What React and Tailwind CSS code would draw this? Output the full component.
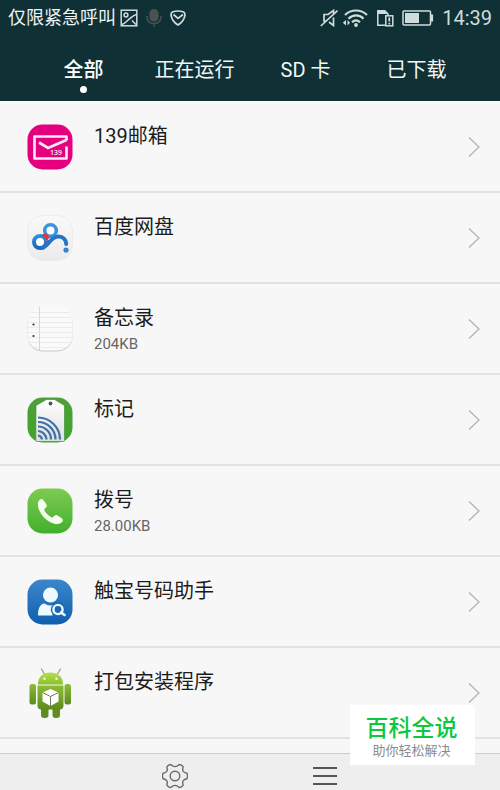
import { useState } from "react";

const tabs = ["全部", "正在运行", "SD 卡", "已下载"];

const apps = [
  { name: "139邮箱", Icon: MailIcon },
  { name: "百度网盘", Icon: CloudDiskIcon },
  { name: "备忘录", size: "204KB", Icon: NotesIcon },
  { name: "标记", Icon: TagIcon },
  { name: "拨号", size: "28.00KB", Icon: PhoneIcon },
  { name: "触宝号码助手", Icon: ContactIcon },
  { name: "打包安装程序", Icon: AndroidIcon },
];

function MailIcon() {
  return (
    <svg viewBox="0 0 46 46" className="w-full" aria-hidden="true">
      <rect x="0.5" y="0.5" width="45" height="45" rx="15" fill="#e4007f" />
      <path d="M39.500 16.500V12.500H7.500v22H39.500V22.500" fill="none" stroke="#fdeaf4" strokeWidth="2.600" strokeLinejoin="round" />
      <path d="M12 18.500l9 5.500 18.500-8" fill="none" stroke="#fdeaf4" strokeWidth="2.800" />
      <text x="23" y="31" fontSize="7" fontWeight="600" fill="#fdeaf4" className="font-['Open_Sans',sans-serif]">
        139
      </text>
    </svg>
  );
}

function CloudDiskIcon() {
  return (
    <svg viewBox="0 0 46 46" className="w-full" aria-hidden="true">
      <defs>
        <linearGradient id="diskBg" x1="0" y1="0" x2="0" y2="1">
          <stop offset="0" stopColor="#f9f9f9" />
          <stop offset="1" stopColor="#ebebeb" />
        </linearGradient>
        <linearGradient id="diskBlue" x1="0" y1="0" x2="0" y2="1">
          <stop offset="0" stopColor="#2f8fdd" />
          <stop offset="1" stopColor="#1b66b8" />
        </linearGradient>
      </defs>
      <rect x="0.5" y="0.5" width="45" height="45" rx="15" fill="url(#diskBg)" stroke="#eaeaea" strokeWidth="0.8" />
      <circle cx="23.500" cy="15.500" r="5.800" fill="#fff" stroke="#3a92dc" strokeWidth="3.600" />
      <circle cx="13" cy="27" r="6" fill="#fff" stroke="url(#diskBlue)" strokeWidth="4" />
      <path
        d="M15.500 32.800c6-2 8-11.300 16-11.300 4.500 0 7.500 3 7.800 7.500"
        fill="none"
        stroke="#2674c8"
        strokeWidth="4"
        strokeLinecap="round"
      />
      <path d="M13 20.800c3.500-.5 6 2 6.500 5.200l3-3.500c-1.500-2-3-3.500-4.500-4.200z" fill="#e0353b" />
      <circle cx="39" cy="35" r="2.600" fill="#3484cf" />
    </svg>
  );
}

function NotesIcon() {
  return (
    <svg viewBox="0 0 46 46" className="w-full" aria-hidden="true">
      <defs>
        <clipPath id="noteClip">
          <rect x="0.5" y="0.5" width="45" height="44" rx="15" />
        </clipPath>
      </defs>
      <rect x="0.5" y="1.500" width="45" height="44" rx="15" fill="#c9c9c9" />
      <g clipPath="url(#noteClip)">
        <rect width="46" height="46" fill="#fafafa" />
        <path
          d="M0 6.500h46M0 11.500h46M0 16.500h46M0 21.500h46M0 26.500h46M0 31.500h46M0 36.500h46M0 41.500h46"
          stroke="#ebebeb"
        />
        <path d="M12.500 0v46" stroke="#d6d6d6" />
      </g>
      <circle cx="6.500" cy="18.500" r="1.100" fill="#333" />
      <circle cx="6.500" cy="30" r="1.100" fill="#333" />
    </svg>
  );
}

function TagIcon() {
  return (
    <svg viewBox="0 0 46 46" className="w-full" aria-hidden="true">
      <defs>
        <linearGradient id="tagBg" x1="0" y1="0" x2="0" y2="1">
          <stop offset="0" stopColor="#4f9f3c" />
          <stop offset="1" stopColor="#3fa428" />
        </linearGradient>
        <linearGradient id="tagPaper" x1="0" y1="0" x2="0" y2="1">
          <stop offset="0" stopColor="#ffffff" />
          <stop offset="1" stopColor="#dedede" />
        </linearGradient>
      </defs>
      <rect x="0.5" y="0.5" width="45" height="45" rx="15" fill="url(#tagBg)" />
      <path
        d="M9 8.500L19.500 2.500h8L37.500 8.500v35a1 1 0 0 1-1 1H9.800a1 1 0 0 1-1-1z"
        fill="url(#tagPaper)"
        stroke="#3b8a2a"
        strokeWidth="0.6"
      />
      <circle cx="23.500" cy="6.500" r="1.900" fill="#4a5a4a" />
      <g fill="none" stroke="#3f72a6" strokeWidth="2.200">
        <path d="M11 38.500a4.500 4.500 0 0 1 4 4" />
        <path d="M11 34a9 9 0 0 1 8.500 8.500" />
        <path d="M11 29.500a13 13 0 0 1 13 13" />
        <path d="M11 25a17.500 17.500 0 0 1 17.500 17.500" />
        <path d="M11 20.500a22 22 0 0 1 22 22" />
      </g>
    </svg>
  );
}

function PhoneIcon() {
  return (
    <svg viewBox="0 0 46 46" className="w-full" aria-hidden="true">
      <defs>
        <linearGradient id="phoneBg" x1="0" y1="0" x2="0" y2="1">
          <stop offset="0" stopColor="#7ecb52" />
          <stop offset="1" stopColor="#41b02c" />
        </linearGradient>
      </defs>
      <rect x="0.5" y="0.5" width="45" height="45" rx="15" fill="url(#phoneBg)" />
      <path
        d="M12 12.500c1.500-1.800 3.200-2.200 4.300-.6l3.200 4.700c.8 1.400.2 2.500-1.600 3.900-.9.800-.7 1.800.3 3.300 1.400 2 3.300 3.800 5.300 5 1.300.8 2.200.8 3-.1 1.400-1.700 2.700-2.200 4.100-1.200l4.400 3c1.600 1.200 1 3-.9 4.300-3 2-6.800 1.300-10.600-.6-5.200-2.700-9-6.800-11.300-12-1.500-3.600-2-7.200-.2-9.700z"
        fill="#f4fff0"
      />
    </svg>
  );
}

function ContactIcon() {
  return (
    <svg viewBox="0 0 46 46" className="w-full" aria-hidden="true">
      <defs>
        <linearGradient id="contactBg" x1="0" y1="0" x2="0" y2="1">
          <stop offset="0" stopColor="#3c87cb" />
          <stop offset="1" stopColor="#0f5fae" />
        </linearGradient>
      </defs>
      <rect x="0.5" y="0.5" width="45" height="45" rx="15" fill="url(#contactBg)" />
      <circle cx="23.500" cy="16" r="7.500" fill="#eefafd" />
      <path d="M11 36.500c0-7 2-11.500 6.500-12 3.500 2.500 8 2.500 12 0l-4 5.500v6.500z" fill="#eefafd" />
      <circle cx="31" cy="30.500" r="7.200" fill="#1a68b5" />
      <circle cx="31" cy="30.500" r="4.600" fill="none" stroke="#eefafd" strokeWidth="2.400" />
      <path d="M34 33.500l3.500 2.500" stroke="#eefafd" strokeWidth="2.600" strokeLinecap="round" />
    </svg>
  );
}

function AndroidIcon() {
  return (
    <svg viewBox="0 0 46 52" className="w-full" aria-hidden="true">
      <defs>
        <linearGradient id="droidHead" x1="0" y1="0" x2="0" y2="1">
          <stop offset="0" stopColor="#b4e04c" />
          <stop offset="1" stopColor="#8cbf2c" />
        </linearGradient>
        <linearGradient id="droidBody" x1="0" y1="0" x2="0" y2="1">
          <stop offset="0" stopColor="#8fbd33" />
          <stop offset="1" stopColor="#5c8a20" />
        </linearGradient>
      </defs>
      <path d="M14.500 2l3 5M33.500 2l-3 5" stroke="#9aa886" strokeWidth="1.400" strokeLinecap="round" />
      <rect x="14" y="38" width="7.500" height="13" rx="3" fill="#5f8d22" />
      <rect x="25.500" y="38" width="7.500" height="13" rx="3" fill="#5f8d22" />
      <rect x="2.500" y="17" width="6.500" height="20.500" rx="2.500" fill="url(#droidBody)" />
      <rect x="37.500" y="17" width="6.500" height="20.500" rx="2.500" fill="url(#droidBody)" />
      <path d="M10.500 18.500h26v20a4 4 0 0 1-4 4h-18a4 4 0 0 1-4-4z" fill="url(#droidBody)" />
      <path d="M11 17.500C11 9.500 16 5.500 23.500 5.500S36 9.500 36 17.500z" fill="url(#droidHead)" />
      <circle cx="17.500" cy="11.800" r="1.200" fill="#f5ffe0" />
      <circle cx="29.500" cy="11.800" r="1.200" fill="#f5ffe0" />
      <path d="M23.500 22l8 3.500v9l-8 4.500-8-4.500v-9z" fill="#fff" />
      <path d="M15.500 25.500l8 4 8-4M23.500 29.500V39" fill="none" stroke="#6f7a60" strokeWidth="1" />
    </svg>
  );
}

function StatusBar() {
  return (
    <div className="flex h-9 items-center justify-between px-2 text-[#cfdcdc]">
      <div className="flex items-center">
        <span className="text-lg text-[#eef4f4]">仅限紧急呼叫</span>
        <svg viewBox="0 0 18 18" className="ml-1 h-[18px] w-[18px]" fill="none" stroke="currentColor" strokeWidth="1.500" aria-hidden="true">
          <rect x="1.200" y="1.200" width="15.600" height="15.600" />
          <circle cx="6" cy="6" r="1.900" />
          <path d="M2 15.500C6 14 7.500 11 10 9.500c2-1.500 3-3 6.500-4M12 11.500l4 4" />
        </svg>
        <svg viewBox="0 0 16 18" className="ml-2 h-[18px] w-4" aria-hidden="true">
          <rect x="3.500" y="0" width="9" height="12.500" rx="4.500" fill="#4c5152" />
          <path d="M1 7c0 5 3 7.500 7 7.500S15 12 15 7M8 14.500V18" fill="none" stroke="#4c5152" strokeWidth="1.500" />
        </svg>
        <svg viewBox="0 0 16 18" className="ml-2 h-[18px] w-4" fill="none" stroke="currentColor" strokeWidth="1.700" aria-hidden="true">
          <path d="M8 2c2 0 3.500.3 5 .8 1.700.6 2.200 1.500 1.900 3.500-.6 4.500-3.400 7.500-6.900 9.700C4.500 13.800 1.700 10.800 1.100 6.300.8 4.300 1.300 3.400 3 2.800 4.500 2.300 6 2 8 2z" />
          <path d="M3.500 5.500L8 9.500l5-4" />
        </svg>
      </div>
      <div className="flex items-center">
        <svg viewBox="0 0 18 18" className="h-[18px] w-[18px]" fill="none" stroke="currentColor" strokeWidth="1.700" aria-hidden="true">
          <path d="M13.500 6V1.500L8 5.500H4v6.500h2.500M9 13l4.500 3.500V8.500M.8 17L17.500 1.500" />
        </svg>
        <svg viewBox="0 0 26 18" className="ml-1 h-[18px] w-[26px]" fill="none" stroke="currentColor" strokeWidth="2.200" aria-hidden="true">
          <path d="M3 6c6-6 16-6 22 0M6.500 9.800c4.500-4.500 11-4.500 15 0M10 13.300c2.500-2.500 5.500-2.500 8 0" />
          <circle cx="14" cy="16" r="1.900" fill="currentColor" stroke="none" />
          <path d="M4 11v5.500L.8 13.800zM5.500 11v5.500L8 13.800z" fill="currentColor" stroke="none" />
        </svg>
        <svg viewBox="0 0 18 18" className="ml-2 h-[18px] w-[18px]" aria-hidden="true">
          <path d="M9 16.200H1.800V1.800h7L12 5v2" fill="none" stroke="currentColor" strokeWidth="1.500" />
          <path d="M1.500 1.500h7L12 5H1.500z" fill="currentColor" />
          <rect x="9.800" y="6.800" width="7" height="10" fill="none" stroke="currentColor" strokeWidth="1.500" />
          <path d="M13.300 8.500v4M13.300 13.800v1.700" stroke="currentColor" strokeWidth="1.800" />
        </svg>
        <svg viewBox="0 0 32 16" className="ml-2 h-4 w-8" aria-hidden="true">
          <rect x="1" y="1" width="27.500" height="14" rx="1" fill="none" stroke="currentColor" strokeWidth="1.500" />
          <rect x="3" y="3" width="14" height="10" fill="currentColor" />
          <path d="M30 4.500v7" stroke="currentColor" strokeWidth="2.200" />
        </svg>
        <span className="ml-2 text-xl">14:39</span>
      </div>
    </div>
  );
}

function Tabs({ active, onChange }) {
  return (
    <nav className="grid h-[65px] grid-cols-4 px-7">
      {tabs.map((tab, i) => (
        <button
          key={tab}
          type="button"
          aria-pressed={i === active}
          onClick={() => onChange(i)}
          className="flex flex-col items-center pt-5 text-xl leading-7 text-[#f2f8f8]"
        >
          <span className={i === active ? "font-medium text-white" : ""}>{tab}</span>
          {i === active && <span className="mt-0.5 h-[7px] w-[7px] rounded-full bg-white" />}
        </button>
      ))}
    </nav>
  );
}

function AppRow({ name, size, Icon }) {
  return (
    <li className="border-b-2 border-[#e2e2e2]">
      <button type="button" className="flex h-[89px] w-full items-start pl-[27px] pr-5 text-left">
        <span className="flex w-[46px] shrink-0 items-center self-stretch">
          <Icon />
        </span>
        <span className="ml-[21px] flex-1 pt-5">
          <span className="block text-xl leading-7 text-[#1c1c1c]">{name}</span>
          {size && <span className="block text-[15px] leading-6 text-[#666]">{size}</span>}
        </span>
        <svg viewBox="0 0 12 22" className="w-3 self-center" fill="none" stroke="#b4b4b4" strokeWidth="1.300" aria-hidden="true">
          <path d="M1 1.500L11 11 1 20.500" />
        </svg>
      </button>
    </li>
  );
}

function BottomBar() {
  return (
    <footer className="flex h-[37px] justify-center gap-[124px] border-t border-[#cccccc] bg-[#eeeeee] pt-[9px]">
      <button type="button" aria-label="设置" className="h-[26px] w-[26px]">
        <svg viewBox="-13 -13 26 26" fill="none" stroke="#6b6b6b" strokeWidth="1.400" strokeLinejoin="round" aria-hidden="true">
          <path d="M12 2.700Q6.200 3.600 8.200 9.100Q6.800 11.300 4.200 11.500Q0 7.200-4.200 11.500Q-6.800 11.300-8.200 9.100Q-6.200 3.600-12 2.700Q-13 0-12-2.700Q-6.200-3.600-8.200-9.100Q-6.800-11.300-4.200-11.500Q0-7.200 4.200-11.500Q6.800-11.300 8.200-9.100Q6.200-3.600 12-2.700Q13 0 12 2.700z" />
          <circle r="4.800" />
        </svg>
      </button>
      <button type="button" aria-label="菜单" className="h-[26px] w-[26px]">
        <svg viewBox="0 0 26 26" stroke="#555555" strokeWidth="2" aria-hidden="true">
          <path d="M1 5h24M1 13h24M1 21h24" />
        </svg>
      </button>
    </footer>
  );
}

export default function App() {
  const [active, setActive] = useState(0);

  return (
    <div className="relative flex min-h-screen flex-col bg-[#f7f7f7] font-[Roboto,'Noto_Sans_CJK_SC',sans-serif]">
      <header className="bg-[#0f3034]">
        <StatusBar />
        <Tabs active={active} onChange={setActive} />
      </header>

      <ul className="flex-1 border-t border-white">
        {apps.map((app) => (
          <AppRow key={app.name} {...app} />
        ))}
      </ul>

      <BottomBar />

      <div className="absolute bottom-[25px] right-[25px] flex h-[60px] w-[125px] flex-col items-center bg-white pr-0.5 pt-2.5">
        <span className="text-[23px] font-medium leading-7 text-[#0cc83c]">百科全说</span>
        <span className="text-[13px] leading-4 text-[#8c8c8c]">助你轻松解决</span>
      </div>
    </div>
  );
}
